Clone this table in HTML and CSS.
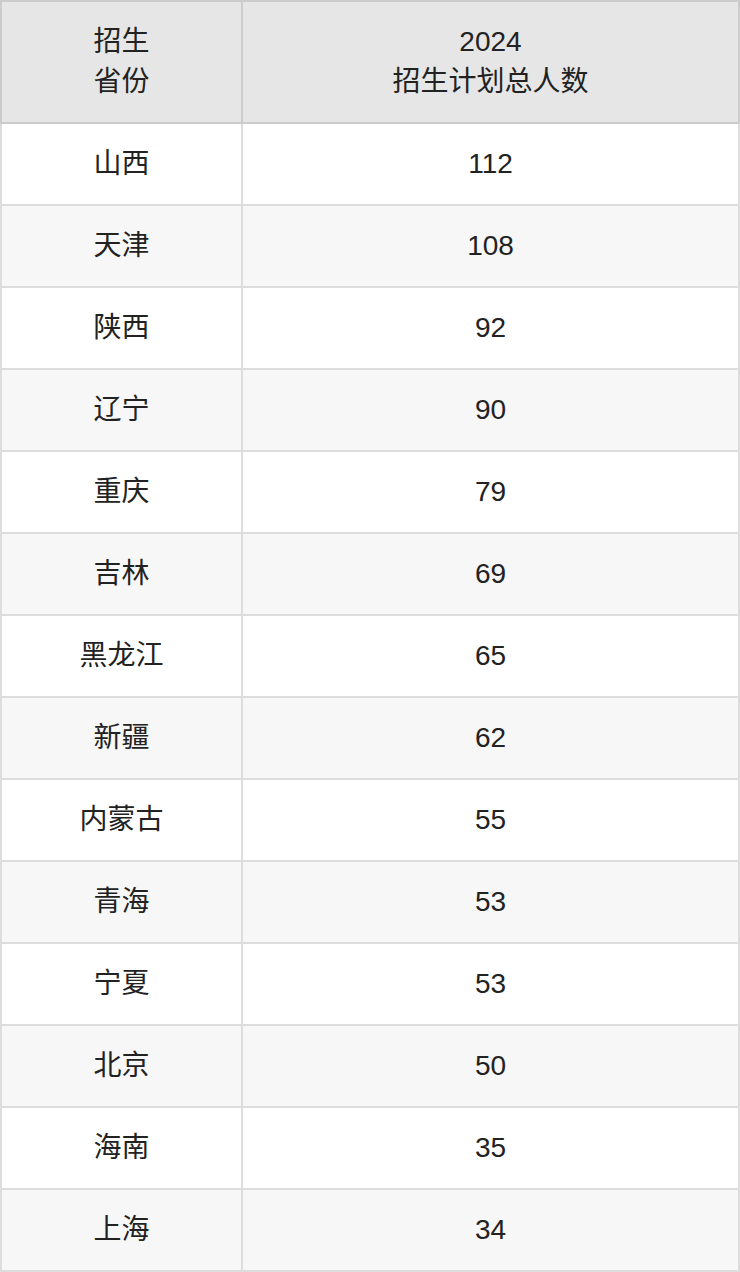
FILE: index.html
```html
<!DOCTYPE html>
<html lang="zh-CN">
<head>
<meta charset="utf-8">
<link rel="stylesheet" href="styles.css">
</head>
<body>
<table class="plan">
  <colgroup><col class="c1"><col class="c2"></colgroup>
  <thead>
    <tr><th>招生<br>省份</th><th>2024<br>招生计划总人数</th></tr>
  </thead>
  <tbody>
    <tr><td>山西</td><td>112</td></tr>
    <tr><td>天津</td><td>108</td></tr>
    <tr><td>陕西</td><td>92</td></tr>
    <tr><td>辽宁</td><td>90</td></tr>
    <tr><td>重庆</td><td>79</td></tr>
    <tr><td>吉林</td><td>69</td></tr>
    <tr><td>黑龙江</td><td>65</td></tr>
    <tr><td>新疆</td><td>62</td></tr>
    <tr><td>内蒙古</td><td>55</td></tr>
    <tr><td>青海</td><td>53</td></tr>
    <tr><td>宁夏</td><td>53</td></tr>
    <tr><td>北京</td><td>50</td></tr>
    <tr><td>海南</td><td>35</td></tr>
    <tr><td>上海</td><td>34</td></tr>
  </tbody>
</table>
</body>
</html>
```
FILE: styles.css
```css
html, body {
  margin: 0;
  padding: 0;
  background: #ffffff;
}
.plan {
  width: 740px;
  table-layout: fixed;
  border-collapse: collapse;
  font-family: "Liberation Sans", "Noto Sans CJK SC", sans-serif;
  font-size: 28px;
  color: #222222;
}
.c1 { width: 241px; }
.c2 { width: 497px; }
.plan th, .plan td {
  padding: 0;
  text-align: center;
  vertical-align: middle;
}
.plan th {
  height: 120px;
  background: #e6e6e6;
  border: 2px solid #cccccc;
  font-weight: normal;
  line-height: 40px;
}
.plan td {
  height: 80px;
  border: 2px solid #dddddd;
  line-height: 40px;
}
.plan tbody tr:nth-child(even) td {
  background: #f7f7f7;
}
```
